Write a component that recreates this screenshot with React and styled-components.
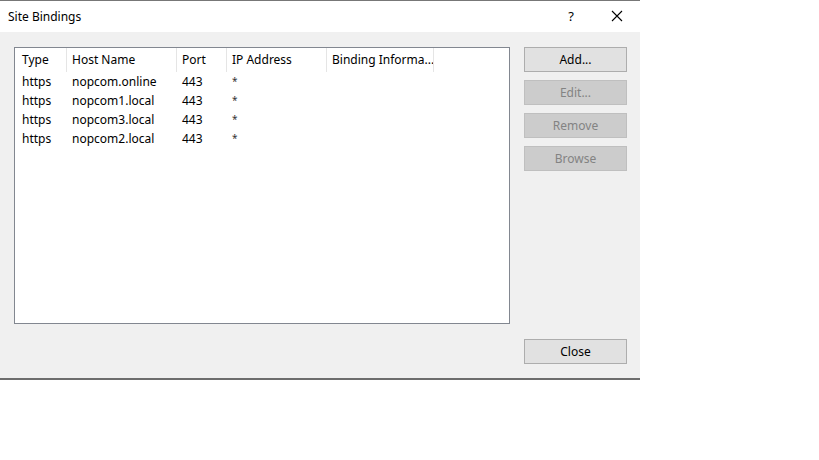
import React from "react";
import styled, { createGlobalStyle } from "styled-components";

const GlobalStyle = createGlobalStyle`
  html, body {
    margin: 0;
    padding: 0;
    background: #ffffff;
  }
  body {
    font-family: "Segoe UI", "Noto Sans", "Open Sans", sans-serif;
    font-size: 12px;
    color: #000;
  }
`;

const columns = [
  { key: "type", label: "Type", width: 52, pad: 7 },
  { key: "host", label: "Host Name", width: 110, pad: 5 },
  { key: "port", label: "Port", width: 50, pad: 5 },
  { key: "ip", label: "IP Address", width: 100, pad: 5 },
  { key: "info", label: "Binding Informa...", width: 107, pad: 5 },
];

const bindings = [
  { type: "https", host: "nopcom.online", port: "443", ip: "*", info: "" },
  { type: "https", host: "nopcom1.local", port: "443", ip: "*", info: "" },
  { type: "https", host: "nopcom3.local", port: "443", ip: "*", info: "" },
  { type: "https", host: "nopcom2.local", port: "443", ip: "*", info: "" },
];

const App = () => {
  return (
    <>
      <GlobalStyle />
      <Dialog>
        <TitleBar>
          <Title>Site Bindings</Title>
          <TitleButtons>
            <HelpGlyph>?</HelpGlyph>
            <CloseGlyph>
              <svg width="12" height="12" viewBox="0 0 12 12">
                <path d="M1 1 L11 11 M11 1 L1 11" stroke="#000" strokeWidth="1.1" fill="none" />
              </svg>
            </CloseGlyph>
          </TitleButtons>
        </TitleBar>
        <Body>
          <ListView>
            <HeaderRow>
              {columns.map((c) => (
                <HeaderCell key={c.key} w={c.width} pad={c.pad}>
                  {c.label}
                </HeaderCell>
              ))}
            </HeaderRow>
            {bindings.map((b, i) => (
              <Row key={i}>
                {columns.map((c) => (
                  <Cell key={c.key} w={c.width} pad={c.pad} small={c.key === "ip"}>
                    {b[c.key]}
                  </Cell>
                ))}
              </Row>
            ))}
          </ListView>
          <ButtonColumn>
            <Button>Add...</Button>
            <Button disabled>Edit...</Button>
            <Button disabled>Remove</Button>
            <Button disabled>Browse</Button>
          </ButtonColumn>
          <Footer>
            <Button>Close</Button>
          </Footer>
        </Body>
      </Dialog>
    </>
  );
};

export default App;

const Dialog = styled.div`
  width: 640px;
  box-sizing: border-box;
  border-top: 1px solid #777777;
  border-bottom: 2px solid #6d6d6d;
  background: #f0f0f0;
  display: flex;
  flex-direction: column;
`;

const TitleBar = styled.div`
  height: 31px;
  background: #ffffff;
  display: flex;
  align-items: center;
  justify-content: space-between;
  padding-left: 8px;
`;

const Title = styled.div`
  font-size: 12px;
  padding-bottom: 1px;
`;

const TitleButtons = styled.div`
  display: flex;
  align-items: center;
  height: 100%;
`;

const HelpGlyph = styled.div`
  width: 46px;
  text-align: center;
  font-size: 13px;
  padding-bottom: 2px;
`;

const CloseGlyph = styled.div`
  width: 46px;
  height: 100%;
  display: flex;
  align-items: center;
  justify-content: center;
  padding-bottom: 2px;
  box-sizing: border-box;
`;

const Body = styled.div`
  display: grid;
  grid-template-columns: 496px 103px;
  grid-template-rows: auto auto;
  column-gap: 14px;
  row-gap: 15px;
  padding: 15px 13px 14px 14px;
`;

const ListView = styled.div`
  width: 496px;
  height: 277px;
  box-sizing: border-box;
  border: 1px solid #828790;
  background: #ffffff;
  overflow: hidden;
`;

const HeaderRow = styled.div`
  display: flex;
  height: 24px;
`;

const HeaderCell = styled.div`
  width: ${(p) => p.w}px;
  box-sizing: border-box;
  padding-left: ${(p) => p.pad}px;
  padding-bottom: 2px;
  border-right: 1px solid #e5e5e5;
  display: flex;
  align-items: center;
  white-space: nowrap;
  overflow: hidden;
`;

const Row = styled.div`
  display: flex;
  height: 19px;
  align-items: center;
`;

const Cell = styled.div`
  width: ${(p) => p.w}px;
  box-sizing: border-box;
  padding-left: ${(p) => p.pad}px;
  white-space: nowrap;
  overflow: hidden;
  font-size: ${(p) => (p.small ? "10px" : "12px")};
  color: ${(p) => (p.small ? "#333" : "#000")};
  padding-bottom: ${(p) => (p.small ? "2px" : "0")};
`;

const ButtonColumn = styled.div`
  display: flex;
  flex-direction: column;
  gap: 8px;
`;

const Footer = styled.div`
  grid-column: 2;
  display: flex;
  flex-direction: column;
`;

const Button = styled.button`
  height: 25px;
  width: 103px;
  box-sizing: border-box;
  font-family: inherit;
  font-size: 12px;
  padding: 0 0 1px;
  border: 1px solid ${(p) => (p.disabled ? "#bfbfbf" : "#adadad")};
  background: ${(p) => (p.disabled ? "#cccccc" : "#e1e1e1")};
  color: ${(p) => (p.disabled ? "#838383" : "#000000")};
  border-radius: 0;
`;
